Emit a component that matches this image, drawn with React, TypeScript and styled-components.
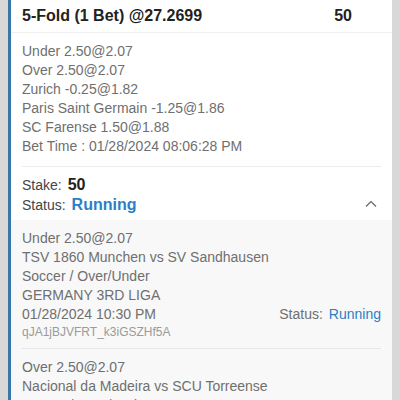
import styled, { createGlobalStyle } from "styled-components";

const GlobalStyle = createGlobalStyle`
  html, body {
    margin: 0;
    padding: 0;
    background: #d8d8d8;
    font-family: "Liberation Sans", Arial, sans-serif;
  }
`;

const Page = styled.div`
  padding: 0 8px;
  height: 400px;
  overflow: hidden;
`;

const Card = styled.div`
  background: #fff;
  border-left: 3px solid #3a76a8;
`;

const Header = styled.div`
  display: flex;
  align-items: center;
  justify-content: space-between;
  height: 32px;
  padding: 0 40px 0 11px;
  border-bottom: 1px solid #f0f0f0;
  font-size: 16px;
  font-weight: 700;
  color: #222;
`;

const Section = styled.div`
  padding: 0 11px;
`;

const Legs = styled.div`
  padding: 9px 0 10px;
  border-bottom: 1px solid #ececec;
`;

const Line = styled.div<{ $small?: boolean; $muted?: boolean }>`
  font-size: ${(p) => (p.$small ? "12px" : "14px")};
  line-height: ${(p) => (p.$small ? "17px" : "19px")};
  color: ${(p) => (p.$muted ? "#9a9a9a" : "#6f6f6f")};
  white-space: nowrap;
`;

const Summary = styled.div`
  padding: 8px 0 5px;
  display: flex;
  align-items: flex-end;
  justify-content: space-between;
`;

const SummaryRow = styled.div`
  font-size: 14px;
  line-height: 19px;
  color: #444;
  display: flex;
  align-items: baseline;
  gap: 6px;
`;

const Value = styled.span<{ $blue?: boolean }>`
  font-size: 16px;
  font-weight: 700;
  color: ${(p) => (p.$blue ? "#2a7fc6" : "#222")};
`;

const Chevron = styled.svg`
  width: 14px;
  height: 14px;
  margin: 0 3px 4px 0;
`;

const Detail = styled.div`
  background: #f8f8f8;
  padding: 0 11px;
`;

const Match = styled.div`
  padding: 9px 0 7px;
  border-bottom: 1px solid #e6e6e6;
`;

const MetaRow = styled.div`
  display: flex;
  justify-content: space-between;
  align-items: baseline;
`;

const Status = styled.span`
  font-size: 14px;
  color: #6f6f6f;
  & > b {
    font-weight: 400;
    color: #2a7fc6;
    margin-left: 6px;
  }
`;

const legs = [
  "Under 2.50@2.07",
  "Over 2.50@2.07",
  "Zurich -0.25@1.82",
  "Paris Saint Germain -1.25@1.86",
  "SC Farense 1.50@1.88",
  "Bet Time : 01/28/2024 08:06:28 PM",
];

const matches = [
  {
    pick: "Under 2.50@2.07",
    teams: "TSV 1860 Munchen vs SV Sandhausen",
    market: "Soccer / Over/Under",
    league: "GERMANY 3RD LIGA",
    time: "01/28/2024 10:30 PM",
    id: "qJA1jBJVFRT_k3iGSZHf5A",
  },
  {
    pick: "Over 2.50@2.07",
    teams: "Nacional da Madeira vs SCU Torreense",
    market: "Soccer / Over/Under",
    league: "PORTUGAL LIGA 2",
    time: "01/28/2024 10:30 PM",
    id: "qJA1jBJVFRT_k3iGSZHf5B",
  },
];

export default function App() {
  return (
    <>
      <GlobalStyle />
      <Page>
        <Card>
          <Header>
            <span>5-Fold (1 Bet) @27.2699</span>
            <span>50</span>
          </Header>
          <Section>
            <Legs>
              {legs.map((l) => (
                <Line key={l}>{l}</Line>
              ))}
            </Legs>
            <Summary>
              <div>
                <SummaryRow>
                  Stake: <Value>50</Value>
                </SummaryRow>
                <SummaryRow>
                  Status: <Value $blue>Running</Value>
                </SummaryRow>
              </div>
              <Chevron viewBox="0 0 14 14" fill="none" stroke="#666" strokeWidth="1.2">
                <path d="M2 9.5 L7 4.5 L12 9.5" />
              </Chevron>
            </Summary>
          </Section>
          <Detail>
            {matches.map((m) => (
              <Match key={m.id}>
                <Line>{m.pick}</Line>
                <Line>{m.teams}</Line>
                <Line>{m.market}</Line>
                <Line>{m.league}</Line>
                <MetaRow>
                  <Line>{m.time}</Line>
                  <Status>
                    Status:<b>Running</b>
                  </Status>
                </MetaRow>
                <Line $small $muted>
                  {m.id}
                </Line>
              </Match>
            ))}
          </Detail>
        </Card>
      </Page>
    </>
  );
}
